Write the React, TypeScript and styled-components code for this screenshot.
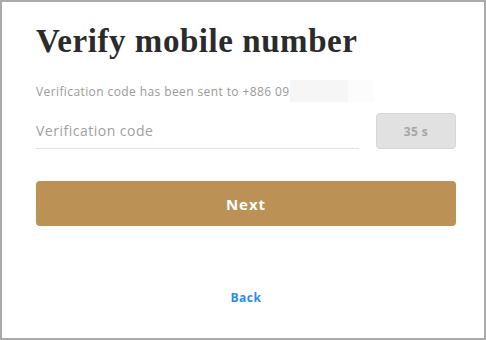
import React from "react";
import styled, {createGlobalStyle} from "styled-components";

const GlobalStyle = createGlobalStyle`
  html, body {
    margin: 0;
    padding: 0;
    background: #fff;
  }

  * {
    box-sizing: border-box;
  }
`;

const Frame = styled.div`
  width: 486px;
  height: 340px;
  border: 2px solid #aaaaaa;
  background: #fff;
  padding: 0 28px 0 34px;
  display: flex;
  flex-direction: column;
  font-family: "Open Sans", "Liberation Sans", sans-serif;
`;

const Title = styled.h1`
  margin: 19px 0 0;
  font-family: "Liberation Serif", "DejaVu Serif", serif;
  font-weight: 700;
  font-size: 33px;
  line-height: 40px;
  color: #2b2b2b;
  letter-spacing: 0.55px;
`;

const SentRow = styled.div`
  margin-top: 19px;
  height: 22px;
  display: flex;
  align-items: center;
  font-size: 12px;
  letter-spacing: 0.4px;
  color: #9a9a9a;
`;

const Masked = styled.span<{ $w: number; $bg: string }>`
  display: inline-block;
  width: ${p => p.$w}px;
  height: 22px;
  background: ${p => p.$bg};
`;

const CodeRow = styled.div`
  margin-top: 11px;
  display: flex;
  align-items: flex-start;
  gap: 17px;
`;

const CodeInput = styled.input`
  flex: 1;
  height: 36px;
  border: none;
  border-bottom: 1px solid #e2e2e2;
  outline: none;
  padding: 0;
  font-family: inherit;
  font-size: 14px;
  letter-spacing: 0.5px;
  color: #333;

  &::placeholder {
    color: #a0a0a0;
  }
`;

const CountDown = styled.button`
  width: 80px;
  height: 36px;
  border: 1px solid #d6d6d6;
  border-radius: 4px;
  background: #e1e1e1;
  color: #a5a5a5;
  font-family: inherit;
  font-weight: 700;
  font-size: 12px;
  letter-spacing: 0.4px;
  padding: 0;
`;

const NextButton = styled.button`
  margin-top: 32px;
  height: 45px;
  width: 100%;
  border: none;
  border-radius: 4px;
  background: #bc9156;
  color: #fff;
  font-family: inherit;
  font-weight: 700;
  font-size: 15px;
  letter-spacing: 1px;
`;

const BackLink = styled.a`
  margin-top: 65px;
  align-self: center;
  font-size: 12px;
  line-height: 14px;
  font-weight: 700;
  letter-spacing: 0.5px;
  color: #2d8cf0;
  text-decoration: none;
  cursor: pointer;
`;

const App = () => {
    return (
        <>
            <GlobalStyle/>
            <Frame>
                <Title>Verify mobile number</Title>
                <SentRow>
                    <span>Verification code has been sent to +886 09</span>
                    <Masked $w={58} $bg="#f6f6f6"/>
                    <Masked $w={26} $bg="#fcfcfc"/>
                </SentRow>
                <CodeRow>
                    <CodeInput placeholder="Verification code"/>
                    <CountDown>35 s</CountDown>
                </CodeRow>
                <NextButton>Next</NextButton>
                <BackLink>Back</BackLink>
            </Frame>
        </>
    );
};

export default App;
